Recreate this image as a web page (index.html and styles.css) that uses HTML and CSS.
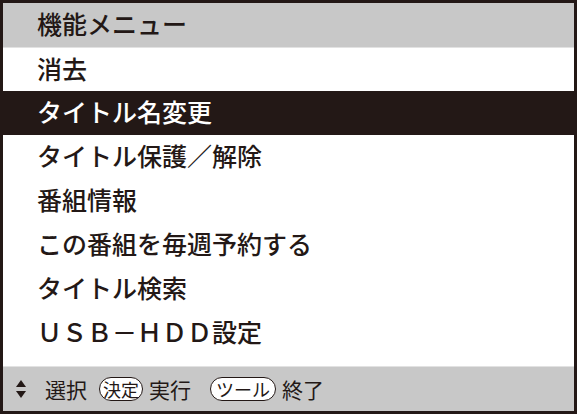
FILE: index.html
```html
<!DOCTYPE html>
<html lang="ja">
<head>
    <meta charset="UTF-8">
    <title>機能メニュー</title>
    <link rel="stylesheet" href="styles.css">
</head>
<body>
<div class="menu">
    <div class="menu-title">機能メニュー</div>
    <ul class="menu-list">
        <li class="menu-item first">消去</li>
        <li class="menu-item selected">タイトル名変更</li>
        <li class="menu-item">タイトル保護／解除</li>
        <li class="menu-item">番組情報</li>
        <li class="menu-item">この番組を毎週予約する</li>
        <li class="menu-item">タイトル検索</li>
        <li class="menu-item">ＵＳＢ－ＨＤＤ設定</li>
    </ul>
    <div class="menu-footer">
        <svg class="updown" width="10" height="18" viewBox="0 0 10 18">
            <path d="M5 0 L10 7 L0 7 Z" fill="#231816"/>
            <path d="M5 18 L10 11 L0 11 Z" fill="#231816"/>
        </svg>
        <span class="hint">選択</span>
        <span class="key">決定</span>
        <span class="hint">実行</span>
        <span class="key wide">ツール</span>
        <span class="hint">終了</span>
    </div>
</div>
</body>
</html>
```

FILE: styles.css
```css
body {
    margin: 0;
    background-color: #fff;
    font-family: "Noto Sans CJK JP", "Noto Sans", sans-serif;
    color: #231816;
}

.menu {
    width: 577px;
    height: 414px;
    box-sizing: border-box;
    border: 3px solid #231816;
    display: flex;
    flex-direction: column;
}

.menu-title {
    height: 44px;
    background-color: #c8c8c8;
    padding-left: 34px;
    font-size: 25px;
    font-weight: 500;
    line-height: 41px;
}

.menu-list {
    list-style: none;
    margin: 0;
    padding: 0 0 10px 0;
    flex: 1;
}

.menu-item {
    height: 44px;
    padding-left: 34px;
    font-size: 25px;
    font-weight: 500;
    line-height: 41px;
}

.menu-item.first {
    border-top: 1px solid #e2e2e2;
    height: 43px;
}

.menu-item.selected {
    background-color: #231816;
    color: #fff;
}

.menu-footer {
    height: 44px;
    background-color: #c8c8c8;
    border-top: 1px solid #e2e2e2;
    display: flex;
    align-items: center;
    padding-left: 13px;
    font-size: 21px;
}

.updown {
    margin-right: 19px;
}

.hint {
    margin-right: 7px;
}

.key {
    border: 1.5px solid #231816;
    border-radius: 14px;
    padding: 0 3px;
    font-size: 18px;
    line-height: 22px;
    margin-right: 6px;
    margin-left: 5px;
    background-color: #fff;
}

.key.wide {
    margin-left: 12px;
    padding: 0 5px;
}
```
